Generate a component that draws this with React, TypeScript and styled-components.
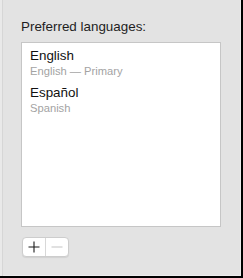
import React from 'react';
import styled, { createGlobalStyle } from 'styled-components';

const GlobalStyle = createGlobalStyle`
  html, body {
    margin: 0;
    padding: 0;
    background: #e3e3e3;
  }
  * {
    box-sizing: border-box;
  }
`;

const languages = [
  { name: 'English', detail: 'English — Primary' },
  { name: 'Español', detail: 'Spanish' },
];

export default function App() {
  return (
    <>
      <GlobalStyle />
      <Window>
        <Label>Preferred languages:</Label>
        <ListBox>
          {languages.map((lang) => (
            <Item key={lang.name}>
              <ItemName>{lang.name}</ItemName>
              <ItemDetail>{lang.detail}</ItemDetail>
            </Item>
          ))}
        </ListBox>
        <Segmented>
          <SegButton>
            <svg width="12" height="12" viewBox="0 0 12 12">
              <path d="M6 0.5v11M0.5 6h11" stroke="#1a1a1a" strokeWidth="1.1" fill="none" />
            </svg>
          </SegButton>
          <SegButton $disabled>
            <svg width="12" height="12" viewBox="0 0 12 12">
              <path d="M0.5 6h11" stroke="#c4c4c4" strokeWidth="1.1" fill="none" />
            </svg>
          </SegButton>
        </Segmented>
      </Window>
    </>
  );
}

const Window = styled.div`
  width: 243px;
  height: 278px;
  background: #e3e3e3;
  border-right: 2px solid #000;
  border-bottom: 2px solid #000;
  box-shadow: inset 2px 0 0 #e9e9e9, inset 3px 0 0 #d6d6d6, inset -1px -1px 0 #ececec;
  padding: 19px 20px 0 21px;
  font-family: 'Liberation Sans', Arial, sans-serif;
  display: flex;
  flex-direction: column;
`;

const Label = styled.div`
  font-size: 13.4px;
  line-height: 16px;
  color: #1e1e1e;
  height: 23px;
`;

const ListBox = styled.div`
  width: 200px;
  height: 185px;
  background: #fff;
  border: 1px solid #c6c6c6;
  padding: 5px 8px 0;
  display: flex;
  flex-direction: column;
  gap: 7px;
`;

const Item = styled.div`
  display: flex;
  flex-direction: column;
`;

const ItemName = styled.div`
  font-size: 13.4px;
  line-height: 16px;
  color: #111;
`;

const ItemDetail = styled.div`
  font-size: 11.2px;
  line-height: 14px;
  color: #a3a3a3;
`;

const Segmented = styled.div`
  margin-top: 10px;
  margin-left: 1px;
  display: flex;
  width: 47px;
  height: 20px;
  background: #fff;
  border: 1px solid #cdcdcd;
  border-radius: 4px;
  box-shadow: 0 1px 1px rgba(0, 0, 0, 0.08);
  overflow: hidden;
`;

const SegButton = styled.div<{ $disabled?: boolean }>`
  flex: 1;
  display: flex;
  align-items: center;
  justify-content: center;
  border-left: ${(p) => (p.$disabled ? '1px solid #d8d8d8' : 'none')};
`;
